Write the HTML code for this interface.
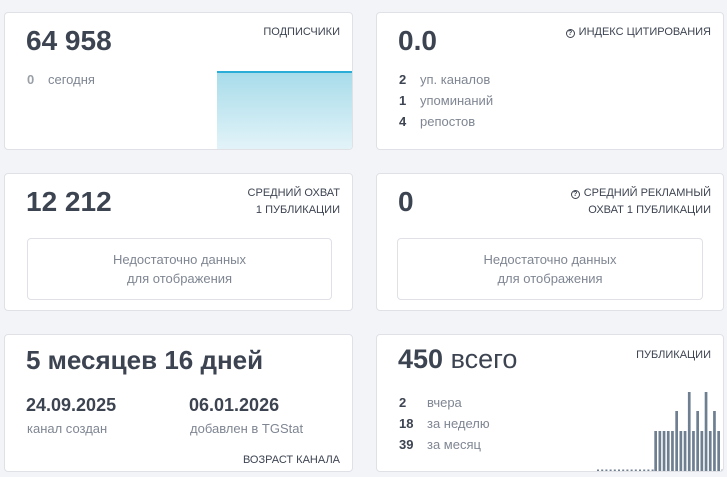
<!DOCTYPE html>
<html><head><meta charset="utf-8"><style>
*{margin:0;padding:0;box-sizing:border-box}
body{width:727px;height:477px;background:#f3f4f8;font-family:"Liberation Sans",sans-serif;position:relative;overflow:hidden;color:#3d4451}
.c{position:absolute;background:#fff;border:1px solid #dfe1e7;border-radius:4px;overflow:hidden}
.a{position:absolute;white-space:nowrap}
.big{font-size:28px;font-weight:bold;color:#3d4451}
.lab{font-size:11px;color:#3d4451;text-align:right;line-height:17px;text-transform:uppercase}
.n{font-size:13px;font-weight:bold;color:#3d4451}
.g{font-size:13px;color:#7f8692}
.box{position:absolute;border:1px solid #dfe1e7;border-radius:4px;text-align:center;font-size:13px;color:#7f8692;line-height:19px;padding-top:11px}
.q{display:inline-block;width:9px;height:9px;border:1.3px solid #3d4451;border-radius:50%;font-size:7px;line-height:7px;text-align:center;font-weight:bold;vertical-align:0px;margin-right:4px}
</style></head><body>
<div class="c" style="left:4px;top:12px;width:349px;height:138px">
 <div class="a big" style="left:21px;top:12px">64 958</div>
 <div class="a lab" style="right:12px;top:11px">Подписчики</div>
 <div class="a n" style="left:22px;top:59px;color:#9aa0a8">0</div>
 <div class="a g" style="left:43px;top:59px">сегодня</div>
 <div class="a" style="left:212px;top:58px;width:137px;height:80px;border-top:2px solid #2aaed8;background:linear-gradient(#a8dcea,#e4f4f9)"></div>
</div>
<div class="c" style="left:376px;top:12px;width:348px;height:138px">
 <div class="a big" style="left:21px;top:12px">0.0</div>
 <div class="a lab" style="right:12px;top:11px"><span class="q">?</span>Индекс цитирования</div>
 <div class="a n" style="left:22px;top:59px">2</div><div class="a g" style="left:43px;top:59px">уп. каналов</div>
 <div class="a n" style="left:22px;top:80px">1</div><div class="a g" style="left:43px;top:80px">упоминаний</div>
 <div class="a n" style="left:22px;top:101px">4</div><div class="a g" style="left:43px;top:101px">репостов</div>
</div>
<div class="c" style="left:4px;top:173px;width:349px;height:138px">
 <div class="a big" style="left:21px;top:12px">12 212</div>
 <div class="a lab" style="right:12px;top:11px">Средний охват<br>1 публикации</div>
 <div class="box" style="left:22px;top:64px;width:305px;height:62px">Недостаточно данных<br>для отображения</div>
</div>
<div class="c" style="left:376px;top:173px;width:348px;height:138px">
 <div class="a big" style="left:21px;top:12px">0</div>
 <div class="a lab" style="right:12px;top:11px"><span class="q">?</span>Средний рекламный<br>охват 1 публикации</div>
 <div class="box" style="left:20px;top:64px;width:306px;height:62px">Недостаточно данных<br>для отображения</div>
</div>
<div class="c" style="left:4px;top:334px;width:349px;height:138px">
 <div class="a big" style="left:21px;top:10px;font-size:26px">5 месяцев 16 дней</div>
 <div class="a" style="left:21px;top:60px;font-size:18px;font-weight:bold">24.09.2025</div>
 <div class="a g" style="left:22px;top:86px">канал создан</div>
 <div class="a" style="left:184px;top:60px;font-size:18px;font-weight:bold">06.01.2026</div>
 <div class="a g" style="left:185px;top:86px">добавлен в TGStat</div>
 <div class="a lab" style="right:12px;top:117px">Возраст канала</div>
</div>
<div class="c" style="left:376px;top:334px;width:348px;height:138px">
 <div class="a" style="left:21px;top:9px;font-size:27px;color:#3d4451"><b>450</b> всего</div>
 <div class="a lab" style="right:12px;top:12px">Публикации</div>
 <div class="a n" style="left:22px;top:60px">2</div><div class="a g" style="left:50px;top:60px">вчера</div>
 <div class="a n" style="left:22px;top:81px">18</div><div class="a g" style="left:50px;top:81px">за неделю</div>
 <div class="a n" style="left:22px;top:102px">39</div><div class="a g" style="left:50px;top:102px">за месяц</div>
 <svg class="a" style="left:0;top:0" width="348" height="138" fill="#6e7f91">
  <rect x="220" y="134.5" width="2" height="1.5"/><rect x="224.2" y="134.5" width="2" height="1.5"/><rect x="228.4" y="134.5" width="2" height="1.5"/><rect x="232.6" y="134.5" width="2" height="1.5"/><rect x="236.8" y="134.5" width="2" height="1.5"/><rect x="241" y="134.5" width="2" height="1.5"/><rect x="245.2" y="134.5" width="2" height="1.5"/><rect x="249.4" y="134.5" width="2" height="1.5"/><rect x="253.6" y="134.5" width="2" height="1.5"/><rect x="257.8" y="134.5" width="2" height="1.5"/><rect x="262" y="134.5" width="2" height="1.5"/><rect x="266.2" y="134.5" width="2" height="1.5"/><rect x="270.4" y="134.5" width="2" height="1.5"/><rect x="274.6" y="134.5" width="2" height="1.5"/>
  <rect x="277.3" y="96" width="2.7" height="41"/><rect x="281.5" y="96" width="2.7" height="41"/><rect x="285.7" y="96" width="2.7" height="41"/><rect x="289.9" y="96" width="2.7" height="41"/><rect x="294.1" y="96" width="2.7" height="41"/>
  <rect x="298.3" y="76" width="2.7" height="61"/><rect x="302.5" y="96" width="2.7" height="41"/><rect x="306.7" y="96" width="2.7" height="41"/>
  <rect x="310.9" y="57" width="2.7" height="80"/><rect x="315.1" y="96" width="2.7" height="41"/><rect x="319.3" y="76" width="2.7" height="61"/><rect x="323.5" y="96" width="2.7" height="41"/>
  <rect x="327.7" y="57" width="2.7" height="80"/><rect x="331.9" y="96" width="2.7" height="41"/><rect x="336.1" y="76" width="2.7" height="61"/><rect x="340.3" y="96" width="2.7" height="41"/>
  <rect x="344.5" y="134.5" width="2" height="1.5"/>
 </svg>
</div>
</body></html>
